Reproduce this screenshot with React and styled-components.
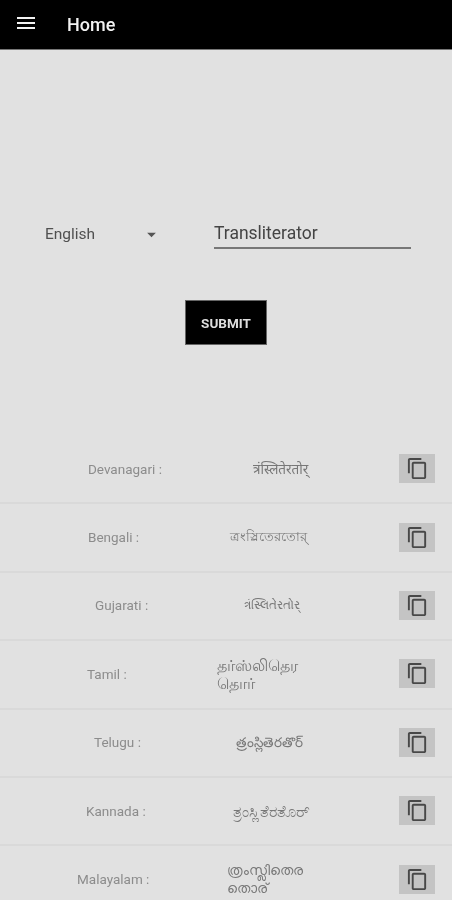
import React from "react";
import styled, { createGlobalStyle } from "styled-components";
import { MdMenu, MdContentCopy, MdArrowDropDown } from "react-icons/md";

const Global = createGlobalStyle`
  html, body {
    margin: 0;
    padding: 0;
    height: 900px;
    overflow: hidden;
    background: #e1e1e1;
  }
  body {
    font-family: Roboto, "Noto Sans", sans-serif;
  }
`;

const Page = styled.div`
  width: 452px;
  height: 900px;
  overflow: hidden;
  background: #e1e1e1;
  display: flex;
  flex-direction: column;
  filter: blur(0.4px);
  & > * {
    flex-shrink: 0;
  }
`;

const Header = styled.header`
  height: 49px;
  background: #000;
  border-bottom: 1px solid #777;
  display: flex;
  align-items: center;
  color: #f2f2f2;
`;

const MenuButton = styled.span`
  display: flex;
  margin-left: 14px;
  margin-top: -3px;
  font-size: 24px;
`;

const Title = styled.h1`
  margin: 0 0 0 29px;
  font-size: 18px;
  font-weight: 500;
`;

const Form = styled.div`
  display: flex;
  align-items: flex-end;
  margin-top: 165px;
  padding-left: 45px;
`;

const Select = styled.div`
  width: 169px;
  display: flex;
  align-items: center;
  height: 30px;
  font-size: 15.5px;
  color: #505050;
`;

const SelectLabel = styled.span`
  width: 96px;
`;

const Caret = styled.span`
  display: flex;
  font-size: 21px;
  color: #555;
`;

const TextField = styled.div`
  width: 197px;
  height: 32px;
  line-height: 36px;
  font-size: 17.5px;
  color: #444;
  border-bottom: 2px solid #777;
`;

const Submit = styled.button`
  display: block;
  align-self: center;
  width: 82px;
  height: 45px;
  margin-top: 51px;
  background: #000;
  border: 1px solid #666;
  color: #dedede;
  font-family: inherit;
  font-size: 13.5px;
  font-weight: 700;
  padding: 0;
`;

const Results = styled.div`
  margin-top: 91px;
`;

const Row = styled.div`
  height: 65.4px;
  padding-bottom: 1px;
  display: flex;
  align-items: center;
  border-bottom: 2px solid #d9d9d9;
`;

const Label = styled.span`
  width: 200px;
  flex-shrink: 0;
  box-sizing: border-box;
  padding-left: ${(p) => p.$left}px;
  font-size: 13.5px;
  color: #8c8c8c;
`;

const Value = styled.span`
  width: ${(p) => p.$width}px;
  margin-left: ${(p) => p.$left}px;
  font-family: "Noto Sans", sans-serif;
  font-size: ${(p) => p.$size || 13.5}px;
  line-height: 18px;
  color: #777;
  word-break: break-all;
`;

const CopyButton = styled.button`
  margin-left: auto;
  margin-right: 17px;
  width: 36px;
  height: 29px;
  background: #c4c4c4;
  border: none;
  padding: 0;
  display: flex;
  align-items: center;
  justify-content: center;
  color: #484848;
  font-size: 23px;
`;

const scripts = [
  { name: "Devanagari", left: 88, text: "त्रंस्लितेरतोर्", valueLeft: 53, width: 120 },
  { name: "Bengali", left: 88, text: "ত্রংস্লিতেরতোর্", valueLeft: 30, width: 130, size: 12.5 },
  { name: "Gujarati", left: 95, text: "ત્રંસ્લિતેરતોર્", valueLeft: 44, width: 120, size: 12 },
  { name: "Tamil", left: 87, text: "தர்ஸ்லிதெரதொர்", valueLeft: 17, width: 96, size: 16 },
  { name: "Telugu", left: 94, text: "త్రంస్లితెరతొర్", valueLeft: 36, width: 120 },
  { name: "Kannada", left: 86, text: "ತ್ರಂಸ್ಲಿತೆರತೊರ್", valueLeft: 33, width: 120, size: 16 },
  { name: "Malayalam", left: 77, text: "ത്രംസ്ലിതെരതൊര്", valueLeft: 27, width: 88 },
];

export default function App() {
  return (
    <Page>
      <Global />
      <Header>
        <MenuButton>
          <MdMenu />
        </MenuButton>
        <Title>Home</Title>
      </Header>
      <Form>
        <Select>
          <SelectLabel>English</SelectLabel>
          <Caret>
            <MdArrowDropDown />
          </Caret>
        </Select>
        <TextField>Transliterator</TextField>
      </Form>
      <Submit type="button">SUBMIT</Submit>
      <Results>
        {scripts.map((s) => (
          <Row key={s.name}>
            <Label $left={s.left}>{s.name} :</Label>
            <Value $left={s.valueLeft} $width={s.width} $size={s.size}>
              {s.text}
            </Value>
            <CopyButton type="button">
              <MdContentCopy />
            </CopyButton>
          </Row>
        ))}
      </Results>
    </Page>
  );
}
